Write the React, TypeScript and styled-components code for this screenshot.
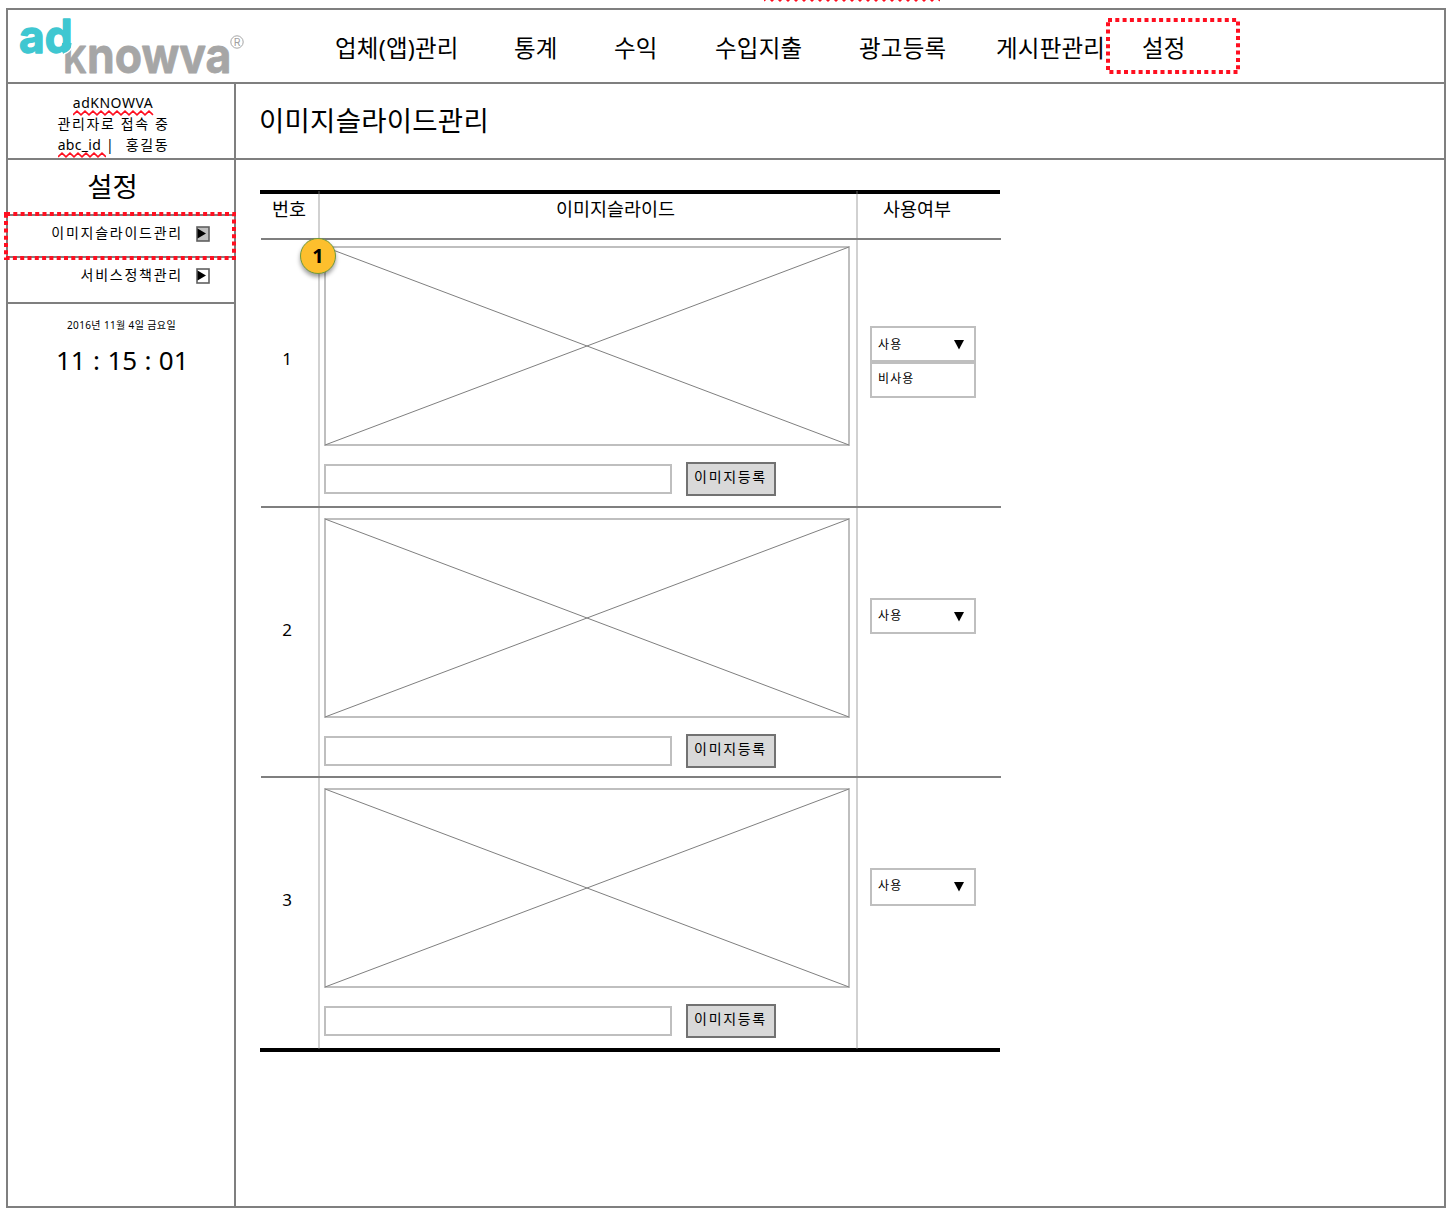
import React from 'react';
import styled, { createGlobalStyle } from 'styled-components';

const LINE = '#7f7f7f';
const SOFT = '#bfbfbf';
const RED = '#ff0f20';

const Global = createGlobalStyle`
  *, *::before, *::after { box-sizing: border-box; }
  body { margin: 0; background: #fff; }
`;

const Page = styled.div`
  position: relative;
  width: 1448px;
  height: 1218px;
  padding: 8px 2px 10px 6px;
  overflow: hidden;
  color: #000;
  font-family: 'Noto Sans', 'Noto Sans CJK KR', sans-serif;
  white-space: nowrap;
`;

const Frame = styled.div`
  display: flex;
  flex-direction: column;
  height: 1200px;
  border: 2px solid ${LINE};
`;

const Header = styled.header`
  display: flex;
  height: 74px;
  border-bottom: 2px solid ${LINE};
`;

const LogoBox = styled.div`
  width: 327px;
  svg { display: block; }
`;

const LogoCap = styled.tspan`
  text-transform: uppercase;
`;

const Nav = styled.nav`
  display: grid;
  grid-template-columns: 179px 100px 101px 144px 137px 146px 100px;
  padding-top: 20px;
`;

const NavItem = styled.a`
  font-size: 23.5px;
  line-height: 36px;
  letter-spacing: 0.2px;
`;

const Body = styled.div`
  display: flex;
  flex: 1;
`;

const Sidebar = styled.aside`
  width: 228px;
  border-right: 2px solid ${LINE};
`;

const Account = styled.div`
  display: flex;
  flex-direction: column;
  align-items: center;
  height: 76px;
  padding: 8px 15px 0 0;
  border-bottom: 2px solid ${LINE};
`;

const AccountLine = styled.div`
  height: 20.8px;
  font-size: 14px;
  line-height: 21px;
  letter-spacing: 1.6px;
  white-space: pre;
`;

const Misspelt = styled.span<{ $spacing: number }>`
  position: relative;
  margin-right: 1px;
  letter-spacing: ${(p) => p.$spacing}px;
`;

const Wave = styled.svg`
  position: absolute;
  left: 0;
  bottom: -4px;
  fill: none;
  stroke: ${RED};
  stroke-width: 1.6;
`;

const StrayWave = styled(Wave)`
  left: 764px;
  top: -4px;
`;

const MenuTitle = styled.h2`
  height: 54px;
  margin: 0;
  padding: 7px 17px 0 0;
  font-size: 27.5px;
  font-weight: 400;
  line-height: 40px;
  text-align: center;
`;

const MenuItem = styled.div<{ $active?: boolean }>`
  display: flex;
  justify-content: flex-end;
  gap: 13px;
  height: ${(p) => (p.$active ? 44 : 46)}px;
  padding: 6px 24px 0 0;
  border-top: ${(p) => (p.$active ? `2px solid ${LINE}` : '0')};
  border-bottom: 2px solid ${LINE};
  font-size: 14px;
  line-height: 22px;
  letter-spacing: 1.75px;
`;

const Arrow = styled.svg`
  margin-top: 4px;
`;

const DateLine = styled.div`
  padding: 13px 0 0 59px;
  font-size: 10px;
  line-height: 16px;
  letter-spacing: 0.37px;
`;

const Clock = styled.div`
  padding: 8px 0 0 48px;
  font-size: 26px;
  line-height: 39px;
  word-spacing: 0.6px;
`;

const Main = styled.main`
  flex: 1;
`;

const TitleBar = styled.div`
  height: 76px;
  padding: 16px 0 0 23px;
  border-bottom: 2px solid ${LINE};
`;

const Title = styled.h1`
  margin: 0;
  font-size: 27.5px;
  font-weight: 400;
  line-height: 42px;
  letter-spacing: 0.25px;
`;

const Table = styled.section`
  position: relative;
  width: 741px;
  margin: 30px 0 0 24px;
  &::before, &::after {
    content: '';
    display: block;
    width: 740px;
    height: 4px;
    background: #000;
  }
`;

const ColumnRule = styled.i<{ $x: number }>`
  position: absolute;
  left: ${(p) => p.$x}px;
  top: 1px;
  width: 2px;
  height: 858px;
  background: rgba(127, 127, 127, 0.36);
`;

const Row = styled.div<{ $height: number; $last?: boolean }>`
  display: grid;
  grid-template-columns: 57px 538px 145px;
  height: ${(p) => p.$height}px;
  margin-left: 1px;
  border-bottom: ${(p) => (p.$last ? '0' : `2px solid ${LINE}`)};
`;

const HeadCell = styled.div<{ $shift: number }>`
  padding-left: ${(p) => p.$shift}px;
  font-size: 18.5px;
  line-height: 30px;
`;

const NumberCell = styled.div<{ $top: number }>`
  padding: ${(p) => p.$top}px 5px 0 0;
  font-size: 17px;
  line-height: 24px;
  text-align: center;
`;

const ImageCell = styled.div<{ $top: number }>`
  padding: ${(p) => p.$top}px 0 0 6px;
`;

const Placeholder = styled.svg`
  display: block;
  fill: none;
`;

const Upload = styled.div`
  display: flex;
  align-items: center;
  gap: 14px;
  margin-top: 16px;
`;

const FileField = styled.div`
  width: 348px;
  height: 30px;
  border: 2px solid ${SOFT};
`;

const UploadButton = styled.button`
  width: 90px;
  height: 34px;
  margin: 0;
  padding: 0 1px 4px 0;
  border: 2px solid #727272;
  outline: 0;
  background: #d9d9d9;
  color: #000;
  font: 14px/20px 'Noto Sans', 'Noto Sans CJK KR', sans-serif;
  letter-spacing: 1.7px;
`;

const UseCell = styled.div<{ $top: number }>`
  padding: ${(p) => p.$top}px 0 0 14px;
`;

const SelectBox = styled.div<{ $height: number; $open: boolean }>`
  display: flex;
  justify-content: space-between;
  width: 106px;
  height: ${(p) => p.$height}px;
  padding: ${(p) => (p.$open ? 6 : 5)}px 10px 0 6px;
  border: 2px solid ${SOFT};
  font-size: 12px;
  line-height: 22px;
  letter-spacing: 1.1px;
  & + & { margin-top: -4px; }
`;

const Caret = styled.svg<{ $open: boolean }>`
  margin-top: ${(p) => (p.$open ? 6 : 7)}px;
`;

const Marker = styled.div`
  position: absolute;
  left: 40px;
  top: 48px;
  width: 36px;
  height: 36px;
  border: 1px solid #6f9a3c;
  border-radius: 50%;
  background: #fdbf2d;
  box-shadow: 0 3px 4px rgba(0, 0, 0, 0.38);
  font-size: 20px;
  font-weight: 700;
  line-height: 33px;
  text-align: center;
`;

const Dotted = styled.svg<{ $x: number; $y: number }>`
  position: absolute;
  left: ${(p) => p.$x}px;
  top: ${(p) => p.$y}px;
  fill: none;
  stroke: ${RED};
  stroke-width: 4;
  stroke-dasharray: 4 3.3;
`;

function wavePath(width: number) {
  let d = 'M0 4.8';
  for (let x = 4, up = true; x <= width; x += 4, up = !up) d += ` L${x} ${up ? 1.2 : 4.8}`;
  return d;
}

function Squiggle({ width }: { width: number }) {
  return (
    <Wave width={width} height={6}>
      <path d={wavePath(width)} />
    </Wave>
  );
}

function Highlight({ x, y, w, h }: { x: number; y: number; w: number; h: number }) {
  return (
    <Dotted $x={x} $y={y} width={w} height={h}>
      <rect x={2} y={2} width={w - 4} height={h - 4} />
    </Dotted>
  );
}

function Logo() {
  return (
    <svg width="250" height="72" fontFamily="Inter, 'Liberation Sans', sans-serif" fontWeight={700} strokeLinejoin="round">
      <text x="11" y="42.5" fontSize="46.5" textLength="53.5" lengthAdjust="spacingAndGlyphs" fill="#3fc7d1" stroke="#3fc7d1" strokeWidth="1.4">ad</text>
      <text x="55.5" y="63.3" fontSize="50" textLength="168" lengthAdjust="spacingAndGlyphs" fill="#a6a6a6" stroke="#a6a6a6" strokeWidth="0.8">
        <LogoCap fontSize="36.5">k</LogoCap>nowva
      </text>
      <path d="M54 33H63.6Q63.4 41 56 43.4L54 42Z" fill="#3fc7d1" />
      <path d="M64.3 35.5Q63.4 41.5 56 44" fill="none" stroke="#fff" strokeWidth="1.4" />
      <circle cx="229" cy="32" r="6.2" fill="none" stroke="#a6a6a6" />
      <text x="225.8" y="35.8" fontSize="10.5" fontWeight={400} fill="#a0a0a0">R</text>
    </svg>
  );
}

function ArrowBox({ fill }: { fill: string }) {
  return (
    <Arrow width="14" height="16">
      <rect x="1" y="1" width="12" height="14" fill={fill} stroke="#606060" strokeWidth="1.6" />
      <path d="M1.5 2.5L10 7.5L1.5 12.5Z" fill="#000" />
    </Arrow>
  );
}

function Select({ options, heights }: { options: string[]; heights: number[] }) {
  const open = options.length > 1;
  return (
    <>
      {options.map((option, i) => (
        <SelectBox key={option} $height={heights[i]} $open={open}>
          {option}
          {i === 0 && (
            <Caret width="10" height="10" $open={open}>
              <path d="M0 0H10L5 9.5Z" />
            </Caret>
          )}
        </SelectBox>
      ))}
    </>
  );
}

const navItems = ['업체(앱)관리', '통계', '수익', '수입지출', '광고등록', '게시판관리', '설정'];

const slides = [
  { no: 1, height: 268, imageTop: 6, numberTop: 107, useTop: 86, options: ['사용', '비사용'], heights: [38, 38] },
  { no: 2, height: 270, imageTop: 10, numberTop: 110, useTop: 90, options: ['사용'], heights: [36] },
  { no: 3, height: 270, imageTop: 10, numberTop: 110, useTop: 90, options: ['사용'], heights: [38] },
];

export default function App() {
  return (
    <Page>
      <Global />
      <Frame>
        <Header>
          <LogoBox><Logo /></LogoBox>
          <Nav>
            {navItems.map((item) => <NavItem key={item}>{item}</NavItem>)}
          </Nav>
        </Header>
        <Body>
          <Sidebar>
            <Account>
              <AccountLine><Misspelt $spacing={0.5}>adKNOWVA<Squiggle width={81} /></Misspelt></AccountLine>
              <AccountLine>관리자로 접속 중</AccountLine>
              <AccountLine><Misspelt $spacing={0.3}>abc_id <Squiggle width={48} /></Misspelt>|  홍길동</AccountLine>
            </Account>
            <MenuTitle>설정</MenuTitle>
            <MenuItem $active>이미지슬라이드관리<ArrowBox fill="#bfbfbf" /></MenuItem>
            <MenuItem>서비스정책관리<ArrowBox fill="#fff" /></MenuItem>
            <DateLine>2016년 11월 4일 금요일</DateLine>
            <Clock>11 : 15 : 01</Clock>
          </Sidebar>
          <Main>
            <TitleBar><Title>이미지슬라이드관리</Title></TitleBar>
            <Table>
              <Row $height={46}>
                <HeadCell $shift={11}>번호</HeadCell>
                <HeadCell $shift={238}>이미지슬라이드</HeadCell>
                <HeadCell $shift={27}>사용여부</HeadCell>
              </Row>
              {slides.map((s) => (
                <Row key={s.no} $height={s.height} $last={s.no === 3}>
                  <NumberCell $top={s.numberTop}>{s.no}</NumberCell>
                  <ImageCell $top={s.imageTop}>
                    <Placeholder width="526" height="200">
                      <rect x="1" y="1" width="524" height="198" stroke={SOFT} strokeWidth="2" />
                      <path d="M1 1L525 199M1 199L525 1" stroke="#7f7f7f" />
                    </Placeholder>
                    <Upload>
                      <FileField />
                      <UploadButton>이미지등록</UploadButton>
                    </Upload>
                  </ImageCell>
                  <UseCell $top={s.useTop}><Select options={s.options} heights={s.heights} /></UseCell>
                </Row>
              ))}
              <ColumnRule $x={58} />
              <ColumnRule $x={596} />
              <Marker>1</Marker>
            </Table>
          </Main>
        </Body>
      </Frame>
      <Highlight x={1106} y={18} w={134} h={56} />
      <Highlight x={4} y={212} w={232} h={48} />
      <StrayWave width={176} height={6}><path d={wavePath(176)} /></StrayWave>
    </Page>
  );
}
